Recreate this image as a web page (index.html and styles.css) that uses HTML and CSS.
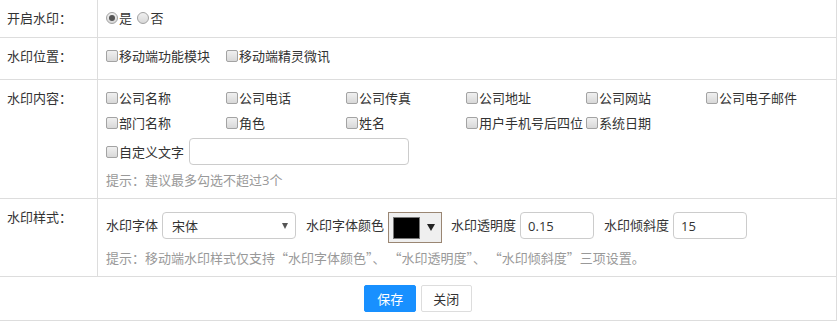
FILE: index.html
```html
<!DOCTYPE html>
<html lang="zh-CN">
<head>
<meta charset="UTF-8">
<title>水印设置</title>
<link rel="stylesheet" href="styles.css">
</head>
<body>

<table class="form-table">
    <tr>
        <th>开启水印：</th>
        <td>
            <label class="radio"><input type="radio" name="open" checked>是</label>
            <label class="radio"><input type="radio" name="open">否</label>
        </td>
    </tr>
    <tr>
        <th>水印位置：</th>
        <td>
            <div class="check-list">
                <label class="check"><input type="checkbox">移动端功能模块</label>
                <label class="check"><input type="checkbox">移动端精灵微讯</label>
            </div>
        </td>
    </tr>
    <tr>
        <th>水印内容：</th>
        <td>
            <div class="check-list">
                <label class="check"><input type="checkbox">公司名称</label>
                <label class="check"><input type="checkbox">公司电话</label>
                <label class="check"><input type="checkbox">公司传真</label>
                <label class="check"><input type="checkbox">公司地址</label>
                <label class="check"><input type="checkbox">公司网站</label>
                <label class="check"><input type="checkbox">公司电子邮件</label>
            </div>
            <div class="check-list">
                <label class="check"><input type="checkbox">部门名称</label>
                <label class="check"><input type="checkbox">角色</label>
                <label class="check"><input type="checkbox">姓名</label>
                <label class="check"><input type="checkbox">用户手机号后四位</label>
                <label class="check"><input type="checkbox">系统日期</label>
            </div>
            <div class="check-list">
                <label class="check check-auto"><input type="checkbox">自定义文字</label>
                <input type="text" class="text-input custom-text">
            </div>
            <p class="hint">提示：建议最多勾选不超过3个</p>
        </td>
    </tr>
    <tr>
        <th>水印样式：</th>
        <td>
            <div class="style-row">
                <span class="field-name">水印字体</span>
                <div class="select-wrap">
                    <select class="font-select">
                        <option>宋体</option>
                        <option>微软雅黑</option>
                        <option>黑体</option>
                    </select>
                </div>
                <span class="field-name">水印字体颜色</span>
                <div class="color-pick">
                    <span class="swatch"></span>
                    <span class="caret"></span>
                </div>
                <span class="field-name">水印透明度</span>
                <input type="text" class="text-input small-input" value="0.15">
                <span class="field-name">水印倾斜度</span>
                <input type="text" class="text-input small-input" value="15">
            </div>
            <p class="hint hint-cn">提示：移动端水印样式仅支持“水印字体颜色”、 “水印透明度”、 “水印倾斜度”三项设置。</p>
        </td>
    </tr>
    <tr>
        <td colspan="2" class="actions">
            <button class="btn btn-primary">保存</button>
            <button class="btn">关闭</button>
        </td>
    </tr>
</table>

</body>
</html>
```

FILE: styles.css
```css
body {
    margin: 0;
    padding: 0;
    font-family: "Open Sans", "Noto Sans CJK SC", sans-serif;
    font-size: 13px;
    color: #333;
    background: #fff;
}

.form-table {
    width: 837px;
    border-collapse: collapse;
}

.form-table th,
.form-table td {
    border-bottom: 1px solid #ddd;
    line-height: 20px;
    vertical-align: top;
}

.form-table th {
    width: 90px;
    padding: 8px 0 8px 7px;
    border-right: 1px solid #ddd;
    font-weight: normal;
    text-align: left;
    white-space: nowrap;
}

.form-table td {
    padding: 8px 0 8px 8px;
    border-right: 1px solid #ddd;
}

/* radio + checkbox */
.radio,
.check {
    display: inline-flex;
    align-items: center;
}

.radio {
    margin-right: 2px;
}

.check {
    width: 120px;
}

.check-list {
    display: flex;
    align-items: center;
    margin-bottom: 5px;
}

.check-list .check:last-child,
.check-list .check-auto {
    width: auto;
}

.radio input,
.check input {
    appearance: none;
    -webkit-appearance: none;
    width: 12px;
    height: 12px;
    margin: 0 1px 0 0;
    border: 1px solid #a3a3a3;
    background: linear-gradient(#f0f0f0, #d8d8d8);
    box-sizing: border-box;
}

.check input {
    border-radius: 2px;
}

.radio input {
    border-radius: 50%;
    position: relative;
}

.radio input:checked::after {
    content: "";
    position: absolute;
    left: 2px;
    top: 2px;
    width: 6px;
    height: 6px;
    border-radius: 50%;
    background: #555;
}

.text-input {
    height: 27px;
    padding: 0 7px;
    border: 1px solid #ccc;
    border-radius: 4px;
    box-sizing: border-box;
    font-family: inherit;
    font-size: 13px;
    color: #333;
    outline: none;
}

.custom-text {
    width: 220px;
    margin-left: 5px;
}

.small-input {
    width: 74px;
}

.hint {
    margin: 0;
    color: #999;
}

.hint-cn {
    font-family: "Noto Sans CJK SC", sans-serif;
}

/* style row */
.style-row {
    display: flex;
    align-items: flex-start;
    margin: 5px 0 5px 0;
    line-height: 27px;
}

.field-name {
    margin-right: 4px;
}

.select-wrap,
.small-input {
    margin-right: 10px;
}

.color-pick {
    margin-right: 9px;
}

.select-wrap {
    position: relative;
    width: 134px;
    height: 27px;
}

.font-select {
    appearance: none;
    -webkit-appearance: none;
    width: 100%;
    height: 27px;
    padding: 0 9px;
    border: 1px solid #ccc;
    border-radius: 4px;
    background: #fff;
    font-family: inherit;
    font-size: 13px;
    color: #333;
    outline: none;
}

.select-wrap::after {
    content: "";
    position: absolute;
    right: 8px;
    top: 11px;
    border-left: 3px solid transparent;
    border-right: 3px solid transparent;
    border-top: 6px solid #555;
    pointer-events: none;
}

.color-pick {
    display: flex;
    align-items: center;
    width: 54px;
    height: 31px;
    padding: 0 0 0 4px;
    border: 1px solid #9a8673;
    background: #efefef;
    box-sizing: border-box;
}

.swatch {
    width: 27px;
    height: 22px;
    background: #000;
    border: 1px solid #777;
    box-sizing: border-box;
}

.caret {
    margin-left: 7px;
    border-left: 4px solid transparent;
    border-right: 4px solid transparent;
    border-top: 7px solid #222;
}

.style-row .small-input:last-child {
    margin-right: 0;
}

/* buttons */
.actions {
    text-align: center;
}

.form-table td.actions {
    padding: 8px 0;
    line-height: 0;
}

.btn {
    width: 52px;
    height: 27px;
    padding: 0;
    margin: 0 1px;
    border: 1px solid #ddd;
    border-radius: 2px;
    background: #fff;
    font-family: inherit;
    font-size: 13px;
    color: #333;
    cursor: pointer;
}

.btn-primary {
    border-color: #1890ff;
    background: #1890ff;
    color: #fff;
}

.btn-primary + .btn {
    width: 51px;
    margin-left: 0;
}
```
